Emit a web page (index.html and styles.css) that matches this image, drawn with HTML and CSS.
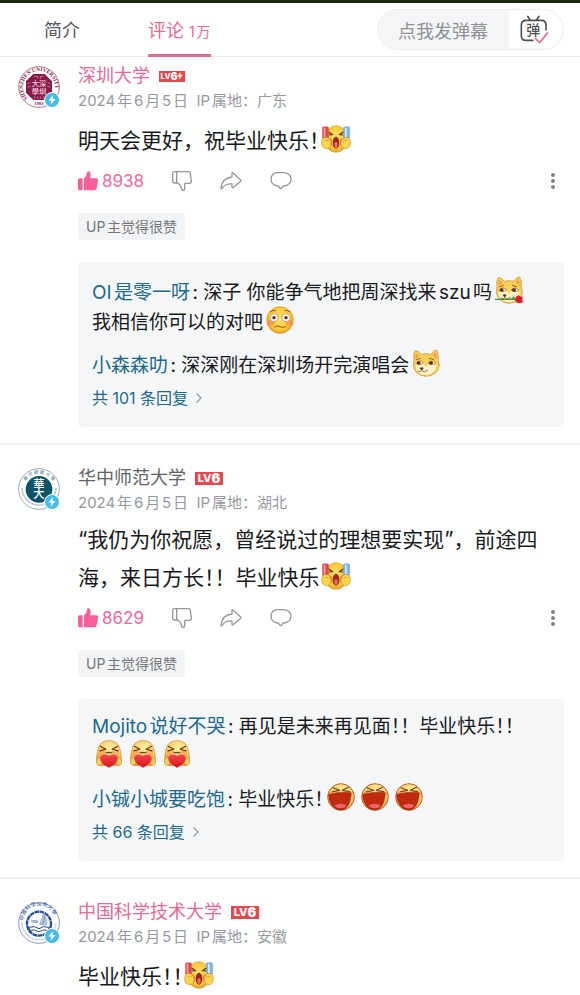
FILE: index.html
```html
<!DOCTYPE html>
<html lang="zh-CN">
<head>
<meta charset="utf-8">
<meta name="viewport" content="width=device-width, initial-scale=1">
<title>评论</title>
<link rel="stylesheet" href="styles.css">
</head>
<body>
<svg class="sprite" aria-hidden="true">
  <defs>
    <radialGradient id="skin" cx="50%" cy="45%" r="55%"><stop offset="0" stop-color="#ffe573"/><stop offset=".75" stop-color="#fbc936"/><stop offset="1" stop-color="#e39a2c"/></radialGradient>
    <radialGradient id="pale" cx="55%" cy="30%" r="70%"><stop offset="0" stop-color="#fff0a0"/><stop offset=".7" stop-color="#fbc860"/><stop offset="1" stop-color="#dd9638"/></radialGradient>
    <linearGradient id="heart" x1="0" y1="0" x2="0" y2="1"><stop offset="0" stop-color="#f5454b"/><stop offset="1" stop-color="#d9141e"/></linearGradient>
  </defs>
  <symbol id="like" viewBox="0 0 60 60">
    <path fill="#fb5f9b" d="M5 22h9v36H5q-5 0-5-5V27q0-5 5-5zM18 22q8-5 9-17 1-5 5-4 8 2 5 18-1 3 2 3h15q7 0 6 7l-4 23q-1 6-8 6H18z"/>
  </symbol>
  <symbol id="dislike" viewBox="0 0 60 60">
    <path fill="none" stroke="#94979b" stroke-width="4" stroke-linejoin="round" d="M14 2v34M7 2h42q5 0 6 5l3 24q0 6-6 6H40q-2 0-2 3v10q0 8-5 8-3 0-4-4-2-12-12-18H7q-5 0-5-5V7q0-5 5-5z"/>
  </symbol>
  <symbol id="share" viewBox="0 0 64 54">
    <path fill="none" stroke="#94979b" stroke-width="4" stroke-linejoin="round" d="M35 4q0-3 3-1l23 21q2 2 0 4L38 47q-3 2-3-1V36Q16 34 5 49q-4 4-3-2 4-29 33-32z"/>
  </symbol>
  <symbol id="reply" viewBox="0 0 64 54">
    <path fill="none" stroke="#94979b" stroke-width="4" stroke-linejoin="round" d="M23 2h17q21 2 22 19 0 19-23 21l-6 7q-2 2-4 0l-5-7Q2 40 2 21 3 3 23 2z"/>
  </symbol>
  <symbol id="more" viewBox="0 0 6 18">
    <g fill="#808286"><circle cx="3" cy="3" r="2"/><circle cx="3" cy="9" r="2"/><circle cx="3" cy="15" r="2"/></g>
  </symbol>
  <symbol id="chevron" viewBox="0 0 8 12">
    <path fill="none" stroke="#94a0a8" stroke-width="1.3" d="M1.500 1.500 6 6l-4.500 4.500"/>
  </symbol>
  <symbol id="bolt" viewBox="0 0 16 16">
    <circle cx="8" cy="8" r="7.500" fill="#45bde8" stroke="#fff"/>
    <path fill="#fff" d="M9 3 4.500 8.500h3L6.500 13l5-6H8.500z"/>
  </symbol>

  <symbol id="cheer" viewBox="0 0 90 84">
    <ellipse cx="45" cy="42" rx="34" ry="40" fill="url(#skin)" stroke="#dda33c" stroke-width="2"/>
    <rect x="4" y="5" width="19" height="36" rx="4" fill="#e3474f" stroke="#b05a55"/>
    <path fill="#f7a4a0" d="M8 8h5v28H8z"/>
    <rect x="67" y="5" width="19" height="36" rx="4" fill="#7fb4ea" stroke="#5d8fc0"/>
    <path fill="#d6ebff" d="M72 8h5v28h-5z"/>
    <path fill="none" stroke="#5c3314" stroke-width="3.500" stroke-linecap="round" d="m24 22 10 7-9 1M66 22l-10 7 9 1"/>
    <path fill="#f08445" d="M21 42q8-6 12 2v18q-8 4-13-4zM69 42q-8-6-12 2v18q8 4 13-4z"/>
    <path fill="#fdd44f" stroke="#cf8c27" stroke-width="2" d="M4 42q7-8 16-4 12 7 10 20-2 14-16 13Q2 68 2 55q0-8 2-13zM86 42q-7-8-16-4-12 7-10 20 2 14 16 13 12-3 12-16 0-8-2-13z"/>
    <path fill="none" stroke="#cf8c27" stroke-width="2" d="M11 47q8-4 13 3M79 47q-8-4-13 3"/>
    <ellipse cx="45" cy="53" rx="9" ry="17" fill="#9d261b" stroke="#74220f" stroke-width="2"/>
    <ellipse cx="45" cy="60" rx="5" ry="9" fill="#ef6b61"/>
  </symbol>

  <symbol id="dog" viewBox="0 0 84 84">
    <path fill="#fbce57" stroke="#cf9c45" stroke-width="2.500" d="M9 5q9-2 19 11 14-4 29 0Q67 1 74 3q7 13 5 32 8 20-7 35-14 12-30 12T11 68Q0 53 6 34 3 15 9 5z"/>
    <path fill="#e0a850" d="M11 11q8 3 11 11-7 3-12 10zM72 10q-8 4-9 10 7 4 11 11z"/>
    <path fill="#fff3c9" d="M11 48q10-5 21-3l8 3 8-3q11-2 25 3 2 10-7 20-11 10-26 10T15 66Q10 58 11 48z"/>
    <path fill="#fbd467" d="M34 34h16l-4 18H38z"/>
    <path fill="#fff" stroke="#8b602e" stroke-width="2" d="M13 42q9-11 21-1-9 11-21 1zM48 42q10-11 23-1-9 11-23 1z"/>
    <ellipse cx="20" cy="42" rx="6" ry="5.500" fill="#5d2918"/><ellipse cx="57" cy="42" rx="6" ry="5.500" fill="#5d2918"/>
    <path fill="none" stroke="#996326" stroke-width="3" d="m12 33 14-5M51 28l15 4"/>
    <path fill="#613222" d="M23 57q6-5 12 0l-5 7h-2z"/>
    <path fill="none" stroke="#8a5530" stroke-width="2.500" stroke-linecap="round" d="M18 66q6 6 11-1 8 8 18-1"/>
  </symbol>
  <symbol id="rose-dog" viewBox="0 0 84 84">
    <use href="#dog" width="84" height="84"/>
    <path fill="none" stroke="#4b8945" stroke-width="4" d="M0 70h65"/>
    <path fill="#54994c" d="m48 69 8-9 5 10z"/>
    <path fill="#e1252b" d="m62 63 8-5 8 4 5-1-1 10 2 8-9 3-9-1-6-8z"/>
    <path fill="none" stroke="#9c1219" stroke-width="2" d="m68 64 6 6 7-3M66 73l8 3"/>
  </symbol>

  <symbol id="blush" viewBox="0 0 84 84">
    <circle cx="42" cy="42" r="40" fill="url(#skin)" stroke="#d99238" stroke-width="2"/>
    <ellipse cx="15" cy="50" rx="11" ry="9" fill="#f5894b" opacity=".65"/><ellipse cx="69" cy="50" rx="11" ry="9" fill="#f5894b" opacity=".65"/>
    <circle cx="24" cy="35" r="12" fill="#fff" stroke="#ba8447" stroke-width="2"/><circle cx="60" cy="35" r="12" fill="#fff" stroke="#ba8447" stroke-width="2"/>
    <circle cx="24" cy="35" r="5" fill="#5b2b1d"/><circle cx="60" cy="35" r="5" fill="#5b2b1d"/>
    <path fill="none" stroke="#a05b24" stroke-width="3" stroke-linecap="round" d="M13 18q7-6 15-5M57 13q8-1 15 5M25 63q8-6 17-1t18 0"/>
  </symbol>

  <symbol id="hug" viewBox="0 0 84 90">
    <path fill="url(#pale)" stroke="#c99843" stroke-width="2.500" d="M42 2q32 0 37 34 4 17 2 34-1 12-12 12H15Q4 82 3 70 1 54 5 36 10 2 42 2z"/>
    <path fill="#f38c46" opacity=".5" d="M10 34q15-5 22 7l-5 15H10zM74 34q-15-5-22 7l5 15h17z"/>
    <path fill="none" stroke="#643419" stroke-width="3.500" stroke-linecap="round" stroke-linejoin="round" d="m14 20 18 10-19 5M70 20 52 30l19 5M32 39q5 5 10 0 5 5 10 0"/>
    <path fill="#fcd05d" stroke="#c98936" stroke-width="2" d="M4 58q11-6 15 6 2 10-4 17Q0 83 2 68zM80 58q-11-6-15 6-2 10 4 17 15 2 13-13z"/>
    <path fill="url(#heart)" d="M42 89Q10 73 14 56q6-15 28-5 22-10 28 5 4 17-28 33z"/>
  </symbol>

  <symbol id="laugh" viewBox="0 0 84 84">
    <circle cx="42" cy="42" r="40" fill="url(#pale)" stroke="#b8672d" stroke-width="3"/>
    <path fill="#ef7536" opacity=".6" d="M4 29q14-7 22 5l-15 7zM80 29q-14-7-22 5l15 7z"/>
    <path fill="none" stroke="#7b431e" stroke-width="3.500" stroke-linecap="round" stroke-linejoin="round" d="m18 14 20 8-21 4M65 13l-19 9 22 4"/>
    <path fill="#bf2b0c" stroke="#8d220f" stroke-width="2" d="M5 35q37-12 67-5-1 35-18 47-13 7-27 0Q7 64 5 35z"/>
    <path fill="#f0656d" d="M22 68q20-11 37 0-17 16-37 0z"/>
  </symbol>

  <symbol id="seal-szu" viewBox="0 0 126 126">
    <circle cx="63" cy="63" r="61" fill="#fff" stroke="#a16075" stroke-width="2.500"/>
    <path id="arc-szu" fill="none" d="M29 97A48 48 0 1 1 97 97"/>
    <text class="seal-latin szu"><textPath href="#arc-szu">SHENZHEN UNIVERSITY</textPath></text>
    <path fill="#8b1947" d="M46 24h34l22 22v34l-22 22H46L24 80V46z"/>
    <path stroke="#d8a9bb" stroke-width="2" fill="none" d="M49 31h10v7M67 38v-7h10M29 54l9-6M29 64l9-4M97 54l-9-6M97 64l-9-4M50 91v7M59 91v7M67 91v7M76 91v7"/>
    <text class="seal-cjk pink" x="63" y="61">大深</text>
    <text class="seal-cjk pink" x="63" y="83">學圳</text>
    <text class="seal-year szu" x="63" y="118">1983</text>
  </symbol>
  <symbol id="seal-ccnu" viewBox="0 0 126 126">
    <circle cx="63" cy="63" r="61" fill="#fff" stroke="#839ba4" stroke-width="2.500"/>
    <path id="arc-ccnu" fill="none" d="M23 39A47 47 0 0 1 105 43"/>
    <text class="seal-top ccnu"><textPath href="#arc-ccnu">華 中 師 範 大 學</textPath></text>
    <path fill="none" stroke="#8fa9b2" stroke-width="5" stroke-dasharray="2.500 2" d="M12 60A51 51 0 0 0 114 60"/>
    <circle cx="63" cy="64" r="40" fill="#0d5368"/>
    <text class="seal-big" x="63" y="61">華</text>
    <text class="seal-big" x="63" y="91">大</text>
  </symbol>
  <symbol id="seal-ustc" viewBox="0 0 126 126">
    <circle cx="63" cy="63" r="61" fill="#fff" stroke="#7388b2" stroke-width="2.500"/>
    <path id="arc-ustc" fill="none" d="M17 56A46 46 0 0 1 109 56"/>
    <text class="seal-top ustc"><textPath href="#arc-ustc">中國科學技術大學</textPath></text>
    <path fill="none" stroke="#9fb0d0" stroke-width="4" stroke-dasharray="2.500 2" d="M12 62A51 51 0 0 0 114 62"/>
    <circle cx="63" cy="65" r="36" fill="#fff" stroke="#244c9a" stroke-width="7" stroke-dasharray="14 1.500"/>
    <path fill="#b4c4df" d="M64 69q14-14 12-38 18 21 10 41z"/>
    <path fill="none" stroke="#5375ae" stroke-width="2" d="M65 67q9-15 11-34M72 69q9-14 8-29"/>
    <text class="seal-year ustc" x="49" y="64">1958</text>
    <path fill="#fff" stroke="#254b91" stroke-width="3" d="M34 76q15-6 29 4 13-10 29-4v9q-16-4-29 4-14-8-29-4z"/>
  </symbol>
</svg>

<header class="topbar">
  <nav class="tabs">
    <button class="tab" type="button">简介</button>
    <button class="tab active" type="button">评论 <small>1万</small></button>
  </nav>
  <div class="danmaku">
    <button class="danmaku-send" type="button">点我发弹幕</button>
    <button class="danmaku-toggle" type="button" aria-label="弹幕开关">
      <svg width="28" height="29" viewBox="0 0 84 87">
        <path fill="none" stroke="#505256" stroke-width="5" stroke-linecap="round" d="M23 4l8 12M57 4l-8 12M39 76H18Q4 76 4 62V30Q4 16 18 16h46q14 0 14 14v15"/>
        <text class="tv-text" x="40" y="61">弹</text>
        <path fill="none" stroke="#e66a98" stroke-width="5" stroke-linecap="round" stroke-linejoin="round" d="m46 70 13 13 23-29"/>
      </svg>
    </button>
  </div>
</header>

<main>
  <article class="comment first">
    <div class="avatar"><svg class="seal"><use href="#seal-szu"/></svg><svg class="bolt"><use href="#bolt"/></svg></div>
    <div class="body">
      <div class="who"><a class="name vip" href="#">深圳大学</a><span class="level small">LV<b>6</b><svg width="6" height="8" viewBox="0 0 7 9"><path fill="#fff" d="M4 0 0 5h3L2 9l5-6H4z"/></svg></span></div>
      <div class="meta">2024年6月5日&nbsp; IP属地：广东</div>
      <p class="text">明天会更好，祝毕业快乐<span class="half">！</span><svg class="emo cheer"><use href="#cheer"/></svg></p>
      <div class="actions">
        <button class="like" type="button"><svg><use href="#like"/></svg>8938</button>
        <button type="button" aria-label="踩"><svg class="square"><use href="#dislike"/></svg></button>
        <button type="button" aria-label="分享"><svg><use href="#share"/></svg></button>
        <button type="button" aria-label="回复"><svg><use href="#reply"/></svg></button>
        <button class="more" type="button" aria-label="更多"><svg><use href="#more"/></svg></button>
      </div>
      <span class="tag">UP主觉得很赞</span>
      <section class="replies">
        <p><a href="#">OI是零一呀</a>: 深子 你能争气地把周深找来szu吗<svg class="emo"><use href="#rose-dog"/></svg><br>我相信你可以的对吧<svg class="emo"><use href="#blush"/></svg></p>
        <p><a href="#">小森森叻</a>: 深深刚在深圳场开完演唱会<svg class="emo"><use href="#dog"/></svg></p>
        <a class="all" href="#">共 101 条回复<svg><use href="#chevron"/></svg></a>
      </section>
    </div>
  </article>

  <article class="comment">
    <div class="avatar"><svg class="seal"><use href="#seal-ccnu"/></svg><svg class="bolt"><use href="#bolt"/></svg></div>
    <div class="body">
      <div class="who"><a class="name" href="#">华中师范大学</a><span class="level">LV<b>6</b></span></div>
      <div class="meta">2024年6月5日&nbsp; IP属地：湖北</div>
      <p class="text">“我仍为你祝愿，曾经说过的理想要实现”，前途四海，来日方长<span class="half">！</span>！毕业快乐<svg class="emo cheer"><use href="#cheer"/></svg></p>
      <div class="actions">
        <button class="like" type="button"><svg><use href="#like"/></svg>8629</button>
        <button type="button" aria-label="踩"><svg class="square"><use href="#dislike"/></svg></button>
        <button type="button" aria-label="分享"><svg><use href="#share"/></svg></button>
        <button type="button" aria-label="回复"><svg><use href="#reply"/></svg></button>
        <button class="more" type="button" aria-label="更多"><svg><use href="#more"/></svg></button>
      </div>
      <span class="tag">UP主觉得很赞</span>
      <section class="replies">
        <p><a href="#">Mojito说好不哭</a>: 再见是未来再见面<span class="half">！</span>！毕业快乐<span class="half">！！</span><br><svg class="emo"><use href="#hug"/></svg><svg class="emo"><use href="#hug"/></svg><svg class="emo"><use href="#hug"/></svg></p>
        <p><a href="#">小铖小城要吃饱</a>: 毕业快乐<span class="half">！</span><svg class="emo"><use href="#laugh"/></svg><svg class="emo"><use href="#laugh"/></svg><svg class="emo"><use href="#laugh"/></svg></p>
        <a class="all" href="#">共 66 条回复<svg><use href="#chevron"/></svg></a>
      </section>
    </div>
  </article>

  <article class="comment">
    <div class="avatar"><svg class="seal"><use href="#seal-ustc"/></svg><svg class="bolt"><use href="#bolt"/></svg></div>
    <div class="body">
      <div class="who"><a class="name vip" href="#">中国科学技术大学</a><span class="level">LV<b>6</b></span></div>
      <div class="meta">2024年6月5日&nbsp; IP属地：安徽</div>
      <p class="text">毕业快乐<span class="half">！！</span><svg class="emo cheer"><use href="#cheer"/></svg></p>
    </div>
  </article>
</main>
</body>
</html>
```
FILE: styles.css
```css
* {
  box-sizing: border-box;
}

body {
  margin: 0;
  border-top: 3px solid #1a2509;
  background: #fff;
  color: #18191c;
  font-family: Inter, "Noto Sans CJK SC", sans-serif;
  text-autospace: normal;
  overflow-x: hidden;
}

button {
  padding: 0;
  border: 0;
  background: none;
  color: inherit;
  font: inherit;
}

a {
  color: #20698e;
  text-decoration: none;
}

p {
  margin: 0;
}

svg {
  display: block;
  flex: none;
}

.sprite {
  position: absolute;
  width: 0;
  height: 0;
}

/* top bar */
.topbar {
  display: flex;
  justify-content: space-between;
  align-items: center;
  height: 54px;
  padding: 0 16px 0 44px;
  border-bottom: 1px solid #ececee;
}

.tabs {
  display: flex;
  gap: 68px;
  align-self: stretch;
}

.tab {
  margin-bottom: -1px;
  border-bottom: 3px solid transparent;
  color: #56585c;
  font-size: 18px;
}

.tab small {
  font-size: 14px;
}

.tab.active {
  border-color: #e66a98;
  color: #e66a98;
}

.danmaku {
  display: flex;
  height: 41px;
  border: 1px solid #ebecee;
  border-radius: 21px;
  overflow: hidden;
}

.danmaku-send {
  padding: 0 21px 0 20px;
  background: #f4f5f7;
  color: #8f9195;
  font-size: 18px;
}

.danmaku-toggle {
  padding: 0 15px 0 11px;
}

.tv-text {
  fill: #505256;
  font-size: 42px;
  font-weight: 500;
  text-anchor: middle;
}

/* comments */
.comment {
  display: flex;
  gap: 18px;
  padding: 21px 16px 16px 18px;
  border-bottom: 2px solid #eeeff0;
}

.comment.first {
  padding-top: 7px;
}

.comment:last-child {
  border-bottom: 0;
}

.avatar {
  position: relative;
  width: 42px;
  height: 42px;
  margin-top: 2px;
}

.seal {
  width: 42px;
  height: 42px;
}

.bolt {
  position: absolute;
  right: 0;
  bottom: 0;
  width: 16px;
  height: 16px;
}

.szu { fill: #8b1947; }
.ccnu { fill: #41717f; }
.ustc { fill: #2b4f94; }

.seal-latin {
  font: 700 16px "Liberation Serif", serif;
}

.seal-year {
  font: 700 14px "Liberation Serif", serif;
  text-anchor: middle;
}

.seal-year.ustc {
  font-size: 10px;
}

.seal-cjk {
  font-size: 22px;
  font-weight: 500;
  text-anchor: middle;
}

.pink { fill: #f4d5e0; }

.seal-top {
  font-size: 13px;
}

.seal-top.ustc {
  font-size: 16px;
}

.seal-big {
  fill: #fff;
  font-size: 34px;
  font-weight: 500;
  text-anchor: middle;
}

.body {
  flex: 1;
  min-width: 0;
}

.who {
  display: flex;
  align-items: center;
  gap: 9px;
  height: 24px;
}

.name {
  color: #626468;
  font-size: 18px;
  line-height: 24px;
}

.name.vip {
  color: #e66a98;
}

.level {
  display: flex;
  align-items: center;
  justify-content: center;
  width: 28px;
  height: 13px;
  background: #e5494b;
  color: #fff;
  font-size: 11px;
  font-weight: 800;
  line-height: 13px;
}

.level b {
  font-size: 13px;
}

.level.small {
  width: 26px;
  height: 11px;
  font-size: 8px;
}

.level.small b {
  font-size: 10px;
}

.meta {
  color: #9699a0;
  font-size: 15px;
  line-height: 25px;
}

/* lines that hold an emoji grow a little above the text */
.text {
  margin-top: 7px;
  font-size: 21px;
  line-height: 35px;
}

.half {
  font-feature-settings: "halt";
}

.emo {
  display: inline-block;
  width: 28px;
  height: 28px;
  margin: 0 3px;
  vertical-align: -5px;
}

.emo.cheer {
  width: 30px;
  margin: 5px 1px 0;
}

.actions {
  display: flex;
  align-items: center;
  gap: 28px;
  height: 24px;
  margin: 11px 8px 20px 0;
  color: #f06a9c;
  font-size: 17px;
}

.actions svg {
  width: 22px;
  height: 18px;
}

.actions .like {
  display: flex;
  align-items: center;
  gap: 4px;
}

.actions .like svg,
.actions .square {
  width: 20px;
  height: 20px;
}

.actions .more {
  margin-left: auto;
}

.actions .more svg {
  width: 6px;
  height: 18px;
}

.tag {
  display: inline-block;
  padding: 0 8px;
  border-radius: 3px;
  background: #f3f4f5;
  color: #75777b;
  font-size: 14px;
  line-height: 27px;
}

.replies {
  margin-top: 22px;
  padding: 14px 14px 18px;
  border-radius: 4px;
  background: #f5f6f8;
  font-size: 19px;
  line-height: 27px;
}

.replies p {
  margin-bottom: 13px;
}

.replies p + p {
  margin-bottom: 8px;
}

.all {
  display: flex;
  align-items: center;
  gap: 7px;
  font-size: 16px;
  line-height: 22px;
}

.all svg {
  width: 8px;
  height: 12px;
}
```
